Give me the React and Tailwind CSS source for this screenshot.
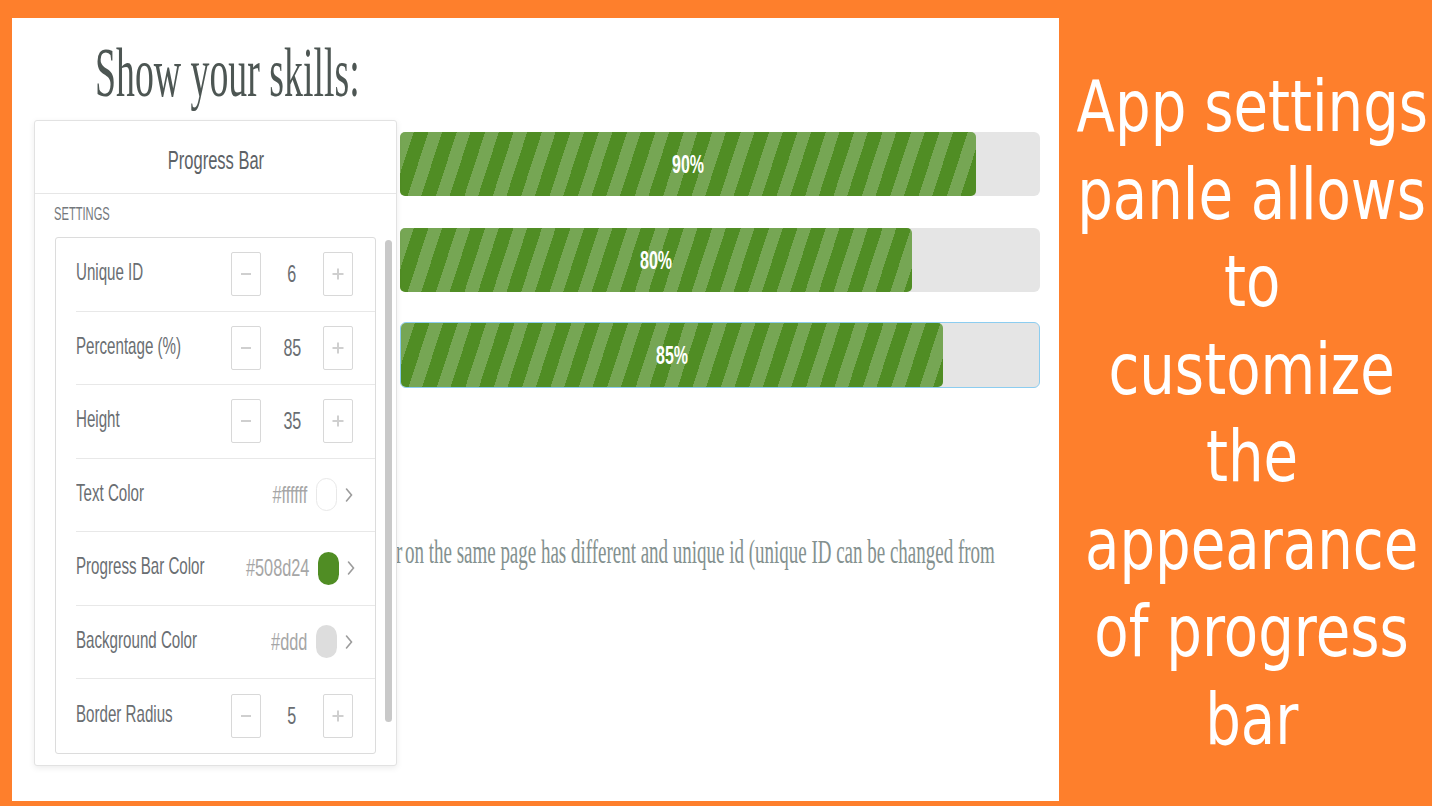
import React from "react";

const bars = [
  { value: 90, selected: false },
  { value: 80, selected: false },
  { value: 85, selected: true },
];

const rows = [
  { label: "Unique ID", type: "step", value: "6" },
  { label: "Percentage (%)", type: "step", value: "85" },
  { label: "Height", type: "step", value: "35" },
  { label: "Text Color", type: "color", value: "#ffffff", swatch: "bg-white border border-[#e8e8e8]" },
  { label: "Progress Bar Color", type: "color", value: "#508d24", swatch: "bg-[#508d24]" },
  { label: "Background Color", type: "color", value: "#ddd", swatch: "bg-[#dddddd]" },
  { label: "Border Radius", type: "step", value: "5" },
];

const blurb = ["App settings", "panle allows", "to", "customize", "the", "appearance", "of progress", "bar"];

function StepButton({ plus }) {
  return (
    <div className="w-[30px] h-[44px] border border-[#d8d8d8] rounded-[2px] flex items-center justify-center">
      <svg width="12" height="12" viewBox="0 0 12 12">
        <path d={plus ? "M6 0.5v11M0.5 6h11" : "M1 6h10"} stroke="#cfcfcf" strokeWidth="2" fill="none" />
      </svg>
    </div>
  );
}

function Chevron() {
  return (
    <svg width="8" height="16" viewBox="0 0 8 16">
      <path d="M1.5 2l5 6-5 6" stroke="#9c9c9c" strokeWidth="1.6" fill="none" strokeLinecap="round" />
    </svg>
  );
}

function SettingRow({ row }) {
  return (
    <div className="h-[73.5px] ml-[20px] pr-[22px] flex items-center border-b border-[#e8e8e8] last:border-b-0">
      <span className="w-[140px] mb-[4px] whitespace-nowrap origin-left scale-x-[0.63] text-[24px] leading-[28px] text-[#6a6e72]">
        {row.label}
      </span>
      {row.type === "step" ? (
        <div className="ml-auto flex items-center">
          <StepButton />
          <div className="w-[62px] flex justify-center">
            <span className="scale-x-[0.67] text-[24px] leading-[28px] text-[#6a6e72]">{row.value}</span>
          </div>
          <StepButton plus />
        </div>
      ) : (
        <div className="ml-auto flex items-center">
          <span className="origin-right scale-x-[0.68] text-[24px] leading-[28px] text-[#a6a6a6] whitespace-nowrap">
            {row.value}
          </span>
          <div className={"ml-[9px] w-[21px] h-[33px] rounded-full " + row.swatch} />
          <div className="ml-[8px] flex items-center">
            <Chevron />
          </div>
        </div>
      )}
    </div>
  );
}

function Bar({ bar }) {
  return (
    <div
      className={
        "w-[640px] rounded-[6px] bg-[#e5e5e5] flex " +
        (bar.selected ? "h-[66px] border border-[#8ccdf0]" : "h-[64px]")
      }
    >
      <div
        className="h-full rounded-[5px] bg-[#508d24] bg-[repeating-linear-gradient(108deg,rgba(255,255,255,0.22)_0px,rgba(255,255,255,0.22)_13px,transparent_13px,transparent_27px)] flex items-center justify-center"
        style={{ width: bar.value + "%" }}
      >
        <span className="scale-x-[0.64] text-[25px] leading-[28px] font-bold text-white">{bar.value}%</span>
      </div>
    </div>
  );
}

export default function App() {
  return (
    <div className="w-[1432px] h-[806px] bg-[#fe7f2c] flex overflow-hidden font-['Liberation_Sans',sans-serif]">
      <div className="relative shrink-0 ml-[12px] mt-[18px] w-[1047px] h-[783px] bg-white overflow-hidden">
        <h1 className="ml-[83px] mt-[20px] h-[70px] leading-[70px] text-[70px] whitespace-nowrap origin-left scale-x-[0.54] text-[#4d5653] font-['Liberation_Serif',serif]">
          Show your skills:
        </h1>

        <div className="ml-[388px] mt-[24px] flex flex-col">
          <Bar bar={bars[0]} />
          <div className="mt-[32px]">
            <Bar bar={bars[1]} />
          </div>
          <div className="mt-[30px]">
            <Bar bar={bars[2]} />
          </div>
        </div>

        <div className="mt-[144px] flex font-['Liberation_Serif',serif] text-[33px] leading-[40px] text-[#84918f] whitespace-nowrap">
          <div className="ml-[83px] w-[307px] shrink-0 flex justify-end">
            <span className="origin-right scale-x-[0.575]">progress bar</span>
          </div>
          <span className="ml-[3px] shrink-0 origin-left scale-x-[0.575]">
            on the same page has different and unique id (unique ID can be changed from
          </span>
        </div>

        <div className="absolute left-[22px] top-[102px] w-[363px] h-[646px] bg-white border border-[#e2e2e2] rounded-[3px] shadow-[0_2px_6px_rgba(0,0,0,0.08)] flex flex-col">
          <div className="h-[73px] border-b border-[#e6e6e6] flex items-center justify-center pt-[6px]">
            <span className="scale-x-[0.66] text-[25px] leading-[30px] text-[#5d6266] whitespace-nowrap">Progress Bar</span>
          </div>
          <div className="h-[43px] pt-[11px] pl-[19px]">
            <div className="origin-left scale-x-[0.62] text-[18px] leading-[18px] text-[#74787c] whitespace-nowrap">SETTINGS</div>
          </div>
          <div className="flex">
            <div className="ml-[20px] w-[321px] h-[517px] border border-[#dcdcdc] rounded-[3px] flex flex-col">
              {rows.map((row) => (
                <SettingRow key={row.label} row={row} />
              ))}
            </div>
            <div className="ml-[9px] mt-[3px] w-[7px] h-[482px] rounded-full bg-[#c9c9c9]" />
          </div>
        </div>
      </div>

      <div className="flex-1 min-w-0 pt-[63px] pl-[13px] flex flex-col font-['DejaVu_Sans',sans-serif] text-white text-[72px] leading-[87.5px]">
        {blurb.map((line) => (
          <div key={line} className="flex justify-center whitespace-nowrap">
            <span className="scale-x-[0.78]">{line}</span>
          </div>
        ))}
      </div>
    </div>
  );
}
